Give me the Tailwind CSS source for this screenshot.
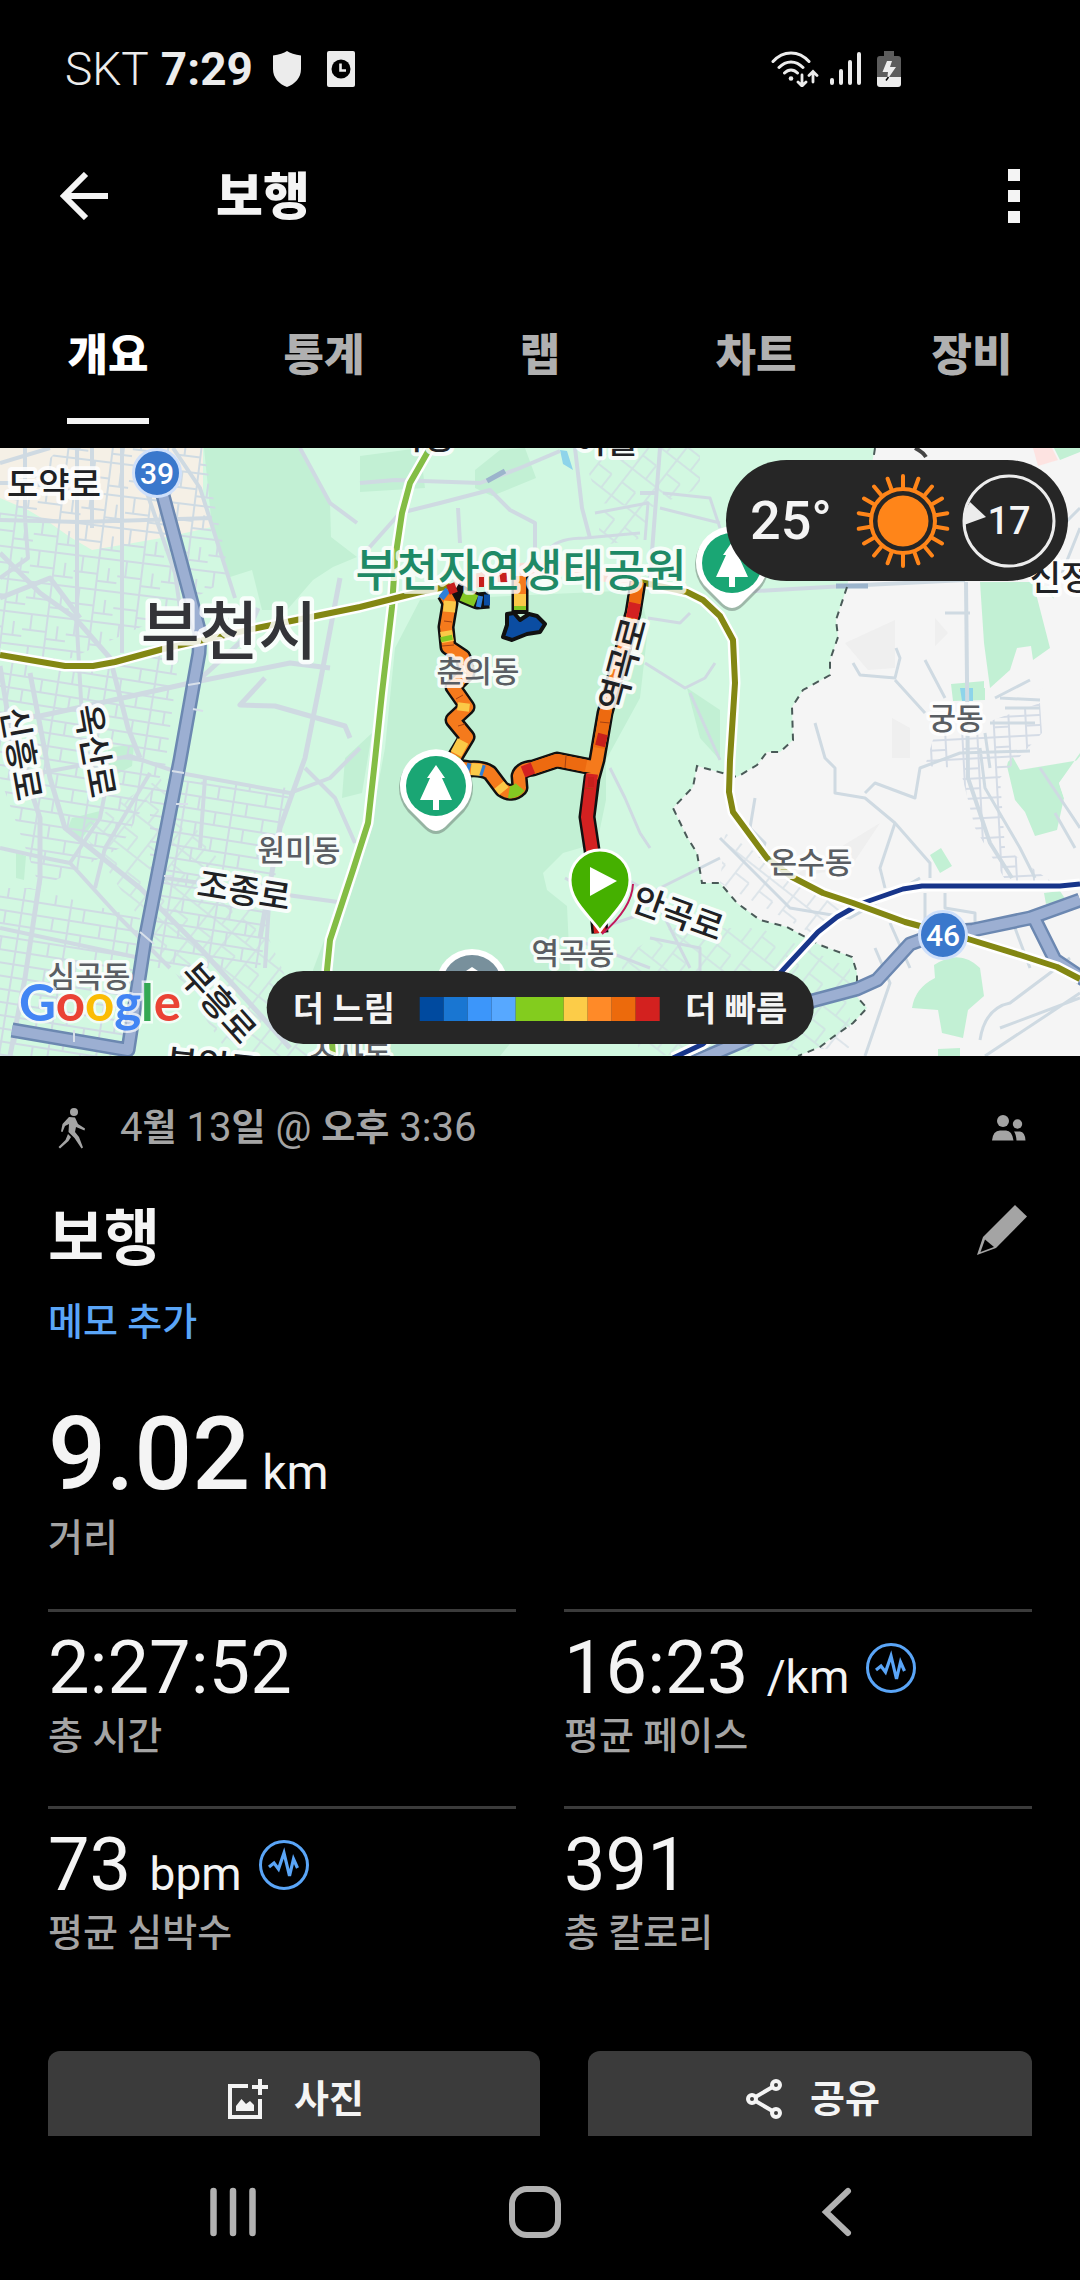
<!DOCTYPE html>
<html lang="ko">
<head>
<meta charset="utf-8">
<meta name="viewport" content="width=device-width, initial-scale=1">
<title>보행</title>
<script src="https://cdn.jsdelivr.net/npm/@tailwindcss/browser@4"></script>
</head>
<body class="bg-black">
<div class="flex h-screen flex-col overflow-hidden bg-black font-['Roboto','Noto_Sans_CJK_KR',sans-serif] text-[#f4f4f4]">

  <!-- Status bar -->
  <div class="flex h-[138px] shrink-0 items-center justify-between pl-[65px] pr-[179px] text-[#ececec]">
    <div class="flex items-center">
      <span class="text-[46px] leading-[56px] font-light">SKT</span>
      <span class="ml-3 text-[46px] leading-[56px] font-bold">7:29</span>
      <svg class="ml-5 h-9 w-7" viewBox="0 0 28 36" fill="currentColor" aria-hidden="true"><path d="M14 0C17 2 22 4 28 4.500V18C28 27 22 33 14 36C6 33 0 27 0 18V4.500C6 4 11 2 14 0Z"/></svg>
      <svg class="ml-[26px] h-9 w-7" viewBox="0 0 28 36" aria-hidden="true"><rect width="28" height="36" rx="2" fill="currentColor"/><circle cx="14" cy="18" r="9.500" fill="#000"/><path d="M13.500 12.500V19.500H19" fill="none" stroke="currentColor" stroke-width="2.600"/></svg>
    </div>
    <div class="flex items-center">
      <svg class="h-9 w-12" viewBox="0 0 48 36" fill="none" stroke="currentColor" stroke-width="3" stroke-linecap="round" aria-hidden="true">
        <path d="M2 10.500C12-1 28-1 38 10.500M8 16.500C15 9 25 9 32 16.500M13.500 22C17.500 18 22.500 18 26.500 22"/>
        <circle cx="20" cy="27.500" r="2.300" fill="currentColor" stroke="none"/>
        <path d="M31 24V34M27 31L31 35L35 31M42 31V21M38 24.500L42 20.500L46 24.500" stroke-width="2.800"/>
      </svg>
      <svg class="ml-2.5 h-9 w-8" viewBox="0 0 32 36" stroke="currentColor" stroke-width="4" stroke-linecap="round" aria-hidden="true"><path d="M3 29V32M12 20V32M21 11V32M30 3V32"/></svg>
      <svg class="ml-4 h-9 w-6" viewBox="0 0 24 36" aria-hidden="true">
        <path d="M7 0H17V5H21Q24 5 24 8V26H0V8Q0 5 3 5H7Z" fill="#5c5c5c"/><path d="M0 26H24V33Q24 36 21 36H3Q0 36 0 33Z" fill="currentColor"/>
        <path d="M10 10H15L13 16H19L10 29L11 21H5.500Z" fill="currentColor"/><path d="M11.500 26L9 29.500" stroke="#000" stroke-width="1.500"/>
      </svg>
    </div>
  </div>

  <!-- App bar -->
  <header class="flex h-[116px] shrink-0 items-center pl-12 pr-12">
    <button type="button" aria-label="뒤로" class="flex size-[72px] items-center justify-center">
      <svg class="size-12" viewBox="0 0 48 48" fill="none" stroke="currentColor" stroke-width="6" aria-hidden="true"><path d="M48 24H4M26 2L4 24L26 46"/></svg>
    </button>
    <h1 class="ml-24 pt-1 text-[51px] leading-[72px] font-black">보행</h1>
    <button type="button" aria-label="더보기" class="ml-auto flex h-[72px] w-9 flex-col items-center justify-center gap-[9px]">
      <span class="size-3 bg-[#f4f4f4]"></span><span class="size-3 bg-[#f4f4f4]"></span><span class="size-3 bg-[#f4f4f4]"></span>
    </button>
  </header>

  <!-- Tabs -->
  <nav class="grid h-[194px] shrink-0 grid-cols-5 pt-[72px] text-[44px] leading-[60px] font-black text-[#b0b0b0]">
    <a href="#overview" aria-current="page" class="flex flex-col items-center text-white"><span>개요</span><span class="mt-8 h-1.5 w-[82px] bg-[#f4f4f4]"></span></a>
    <a href="#stats" class="text-center">통계</a>
    <a href="#laps" class="text-center">랩</a>
    <a href="#charts" class="text-center">차트</a>
    <a href="#gear" class="text-center">장비</a>
  </nav>

  <main class="min-h-0 flex-1 overflow-hidden">
    <!-- Route map -->
    <section class="relative h-[608px] overflow-hidden bg-[#d2f8e1]" aria-label="지도">
      <svg class="block h-full w-full font-['Noto_Sans_CJK_KR',sans-serif]" viewBox="0 0 1080 608" preserveAspectRatio="xMidYMid slice" role="img">
        <defs>
          <pattern id="blocksA" width="44" height="32" patternUnits="userSpaceOnUse" patternTransform="rotate(7)"><path d="M0 1H44M0 17H24M24 24H44M8 0V17M24 0V32M35 10V24" fill="none" stroke="#cfdbe3" stroke-width="2"/></pattern>
          <pattern id="blocksB" width="48" height="26" patternUnits="userSpaceOnUse" patternTransform="rotate(9)"><path d="M0 1H48M0 14H48M12 0V14M30 14V26M46 0V26" fill="none" stroke="#cfdbe3" stroke-width="2"/></pattern>
          <pattern id="blocksC" width="30" height="34" patternUnits="userSpaceOnUse" patternTransform="rotate(38)"><path d="M0 1H30M1 0V34M0 18H18M18 18V34" fill="none" stroke="#cfdbe3" stroke-width="2"/></pattern>
          <pattern id="blocksD" width="32" height="20" patternUnits="userSpaceOnUse" patternTransform="rotate(-3)"><path d="M0 1H32M1 0V20M18 0V20M18 11H32" fill="none" stroke="#d5dce6" stroke-width="2"/></pattern>
        </defs>

        <!-- Land cover -->
        <path fill="#f5f0e6" d="M0 0H203V45L212 79L167 89L133 95L92 102L70 89L50 75L28 62L0 50Z"/>
        <g fill="#c2f0d4">
          <path d="M204 0L212 79L230 129L252 122L262 162L287 162L313 132L333 119L357 109L331 89L330 55L300 0Z"/>
          <path d="M360 8L420 0L425 40L360 44ZM475 22L500 2L525 0L536 30L492 48L475 40Z"/>
          <path d="M395 200L420 152L640 142L648 180L640 250L606 312L606 352L597 395L563 405L543 425L547 442L567 458L570 522L500 608H325L313 522L340 450L372 370L385 300Z"/>
          <path d="M345 310L372 285L362 345L342 350ZM72 370L104 362L82 390L66 384ZM108 300L134 296L132 318L110 330ZM16 405L26 408L24 432L16 430Z"/>
          <path d="M687 240L720 262V312L700 290Z"/>
        </g>
        <path fill="#f5f5f5" d="M875 0L847 139L836 172L838 189L830 212V227L803 242L792 259L793 292L780 304L767 304L757 317L737 329L697 318L693 339L673 360L687 389L697 405L702 435L720 435L737 455L760 472L787 479L820 497L852 509L857 525V549L867 560L853 575L833 589L820 599L798 608H1080V0Z"/>
        <path fill="#efefef" d="M845 195L895 172L895 220L868 222ZM892 270L910 280V310H892ZM790 430L880 375L850 420ZM935 170L948 185L935 198Z"/>
        <g fill="#c2f0d4">
          <path d="M976 134H1033L1057 153L1080 158V312L1020 322L1010 304L1007 318L1015 352L1025 364L1035 388L1057 382L1064 350L1059 335L1080 305V140Z"/>
          <path d="M951 236L985 233V252L953 253ZM930 407L941 400L952 418L940 425ZM1044 445L1060 443L1066 452L1046 456Z"/>
          <path d="M934 517Q960 500 980 520L984 548L968 562L963 590L942 585L938 562L912 560Q915 540 935 530ZM938 601L960 600V608H938Z"/>
        </g>
        <path fill="#f5f5f5" d="M976 134V165L984 195V240H998L1017 200L1031 198L1033 212L1052 215L1044 240L1022 248L1043 258L1044 282L1030 290L1010 312L985 335V134Z"/>
        <path fill="#c2f0d4" d="M980 134H1033L1050 200L1033 212L1031 198L1017 200L1010 222L990 240L984 195Z"/>
        <path fill="#f5f5f5" d="M1052 145L1058 163L1071 167L1080 160V0H1000L1040 130ZM1080 308L1059 335L1064 350L1080 348Z"/>
        <path fill="#fde3e1" d="M1033 0H1052L1058 12L1038 18Z"/><path fill="#c2f0d4" d="M1054 0H1080V4L1060 12Z"/>
        <path fill="#8ed4ea" d="M960 240H973V253H962ZM560 2L567 3L573 22L563 16Z"/>

        <!-- Dense blocks -->
        <path fill="url(#blocksA)" d="M60 0H203L230 130L150 175L60 215L0 200V60Z"/>
        <path fill="url(#blocksB)" d="M80 215L180 200L165 320L120 400L40 440L0 330V215ZM150 330L290 340L260 520H150Z"/>
        <path fill="url(#blocksB)" d="M30 440L140 470L120 608H0V440Z"/>
        <path fill="url(#blocksC)" d="M80 380L160 330L260 470L320 608H230Z" opacity=".7"/>
        <path fill="url(#blocksC)" d="M585 15L620 0H700V40L650 60L600 55ZM600 65L648 55L645 90L598 98Z" opacity=".7"/>
        <path fill="url(#blocksC)" d="M620 510L670 480L760 480L850 520V600L640 608Z" opacity=".6"/>
        <path fill="url(#blocksD)" d="M935 285L985 275L1040 255L1042 285L1000 330L1005 400L1060 440H1010L975 380L960 320L925 318Z"/>
        <path fill="url(#blocksC)" d="M725 385L780 420L850 455L820 490L720 435Z" opacity=".6"/>

        <!-- Local streets -->
        <g fill="none" stroke="#cfdae2" stroke-width="3" stroke-linejoin="round">
          <path stroke-width="4" d="M77 0V180L82 270M92 0V80M25 0V70L28 110L0 130M0 15L50 0M0 35H75M122 0V205M0 72L80 74L212 70M140 25L175 125L180 160M173 0L200 40L235 150"/>
          <path stroke-width="5" d="M0 105L40 145L75 170L110 210L128 280L140 310M0 150L50 130L80 170"/>
          <path stroke-width="5" d="M0 270L40 268L100 255L190 235L290 215L330 220M258 160L245 190L190 240M265 230L240 257L275 258L345 278L350 290M340 130L320 235L305 310L280 380L260 490"/>
          <path stroke-width="5" d="M30 225L50 330L65 380L140 440L200 500L290 600M0 218L10 280L40 370L40 430L25 530L10 608"/>
          <path stroke-width="4" d="M40 325L130 308L180 325L290 345L330 330L360 300M105 345L100 370L70 415M150 325L105 400L95 440M0 400L45 410L70 415L120 470L170 520"/>
          <path stroke-width="4" d="M0 480L140 510M165 430L345 455M270 440L265 520M205 330L200 400M305 320L335 350L355 395"/>
          <path stroke-width="4" d="M360 35L395 32L480 35L520 20L560 3M575 0L582 60L590 90M660 0L650 130M655 45H640M300 0L330 55L357 75M360 110L400 65L440 55L490 42L510 62L535 75V100M458 60L460 95"/>
          <path d="M550 100Q560 90 585 90L640 85M660 60L720 75M663 45L710 50L720 80M595 65L648 55L645 92M648 170L680 175L690 165M645 215L685 240L705 230L715 215M690 245L720 312M610 320L625 350L640 385L650 400M565 430L600 450M625 430L650 445L720 410"/>
          <path d="M600 480L660 460L690 520M650 490L700 500V540M585 495L650 520"/>
          <path stroke-width="4" d="M720 145L845 138L965 132M966 134L968 330L990 395L1012 430"/>
          <path d="M853 215L860 227L895 230L900 210L896 200M895 232L925 265M925 212L945 250M945 165H970M815 275L825 310L835 320V345L865 350L895 375L930 415V430M865 345L875 335L915 350L920 320L960 305L1030 303M980 300L985 340L1020 400L1035 430M995 250L1030 232M1000 250L1040 252M1005 260H1040M990 275H1035M985 285L990 320"/>
          <path d="M895 375L880 420L885 440M755 350L750 380L765 395L760 410M720 390L790 460L850 470L920 430M925 445V490M945 445V460L975 465V480M890 475L910 520M875 500L890 535L865 608M980 592Q985 560 1010 555L1070 510M985 608L1050 565L1080 545M1015 480L1030 520M1000 580L1080 550M1040 320L1080 380M1055 365L1075 400M1040 100L1080 60M1060 130L1080 80"/>
        </g>
        <path d="M487 33L505 23M836 138H868" stroke="#9cb4cc" stroke-width="5"/>
        <path fill="none" stroke="#4a5a58" stroke-width="2" stroke-dasharray="7 6" d="M875 0L872 20M847 139L836 172L838 189L830 212V227L803 242L792 259L793 292L780 304L767 304L757 317L737 329L697 318L693 339L673 360L687 389L697 405L702 435L720 435L737 455L760 472L787 479L820 497L852 509L857 525V549L867 560L853 575L833 589L820 599L798 608"/>

        <!-- Highways -->
        <g fill="none" stroke-linejoin="round">
          <path stroke="#6c88b1" stroke-width="15" d="M157 25L200 185L199 205L180 312L145 492L128 602L12 582M680 620L750 590L812 553L857 541L877 532L910 496L943 484L973 482L1030 470L1080 452M1035 472L1055 512L1085 532"/>
          <path stroke="#9cafd2" stroke-width="10" d="M157 25L200 185L199 205L180 312L145 492L128 602L12 582M680 620L750 590L812 553L857 541L877 532L910 496L943 484L973 482L1030 470L1080 452M1035 472L1055 512L1085 532"/>
          <path stroke="#d8e0ea" stroke-width="2" d="M188 237L200 235M193 261L203 263M172 323L184 325M176 356H188M164 428H172M140 484L154 496M74 582V594"/>
        </g>

        <!-- Subway lines -->
        <g fill="none" stroke-linejoin="round">
          <path stroke="#fff" stroke-width="11" d="M430 0L410 35L402 65L395 112L392 159L382 245L375 312L368 375L353 422L330 492L327 522L333 608"/>
          <path stroke="#84bd45" stroke-width="6" d="M430 0L410 35L402 65L395 112L392 159L382 245L375 312L368 375L353 422L330 492L327 522L333 608"/>
          <path stroke="#fff" stroke-width="11" d="M673 610L703 596L782 523L818 484L837 469L860 456L903 441L922 438H1060L1080 436"/>
          <path stroke="#17358a" stroke-width="5" d="M673 610L703 596L782 523L818 484L837 469L860 456L903 441L922 438H1060L1080 436"/>
          <path stroke="#fff" stroke-width="11" d="M0 207L65 218H93L115 214L163 201L257 180L360 159L420 144L450 138M640 134L687 144L703 152L720 168L733 192L735 235L730 312L729 344L733 364L767 410L792 429L823 445L853 455L905 474L968 491L1020 507L1057 519L1080 531"/>
          <path stroke="#838713" stroke-width="6" d="M0 207L65 218H93L115 214L163 201L257 180L360 159L420 144L450 138M640 134L687 144L703 152L720 168L733 192L735 235L730 312L729 344L733 364L767 410L792 429L823 445L853 455L905 474L968 491L1020 507L1057 519L1080 531"/>
        </g>

        <!-- Recorded route, coloured by pace -->
        <g fill="none" stroke-linejoin="round">
          <path stroke="#f7ddd4" stroke-width="14" d="M455 138L520 122L560 120L640 132"/>
          <path stroke="#111" stroke-width="17" d="M445 146L450 155L446 179L448 199L463 209L467 225L453 239L467 259L453 272L467 289L455 309L450 318L470 321Q482 320 490 325L502 341Q512 348 520 340L519 328Q521 321 533 320L557 312L592 319M520 128V166M455 142L465 148L477 153L489 152M638 134L633 165L605 265L597 312L592 330L587 369L592 402L600 485"/>
          <path stroke="#f57a1c" stroke-width="12" d="M445 146L450 155L446 179L448 199L463 209L467 225L453 239L467 259L453 272L467 289L455 309L450 318L470 321Q482 320 490 325L502 341Q512 348 520 340L519 328Q521 321 533 320L557 312L592 319M520 128V160M638 134L633 165L605 265L597 312L592 330"/>
          <path stroke="#ed6a10" stroke-width="12" d="M533 320L557 312L586 318M637 134L635 155M606 262L599 300"/>
          <path stroke="#d32121" stroke-width="12" d="M635 155L632 170M592 326L587 369L592 402L600 485M523 324L533 320"/>
          <path stroke="#fbc947" stroke-width="12" d="M450 153L449 164M446 183L448 194M464 255L463 263M463 293L456 306M471 321L482 322M499 337L504 343M520 146V158"/>
          <path stroke="#84c822" stroke-width="12" d="M446 188L447 193M455 307L452 313M509 344Q515 345 520 339M462 147L476 153M520 158V162"/>
          <path stroke="#2f7fd8" stroke-width="11" d="M442 144L447 148M477 153L482 154M466 320L470 321M481 322L484 323"/>
          <path stroke="#0b4da2" stroke-width="11" d="M484 152H490"/>
          <path stroke="#c71f1c" stroke-width="10" d="M479 134H484M500 130L507 129M448 142L456 139M600 298L603 286M588 334H594"/>
          <path stroke="#a54112" stroke-width="1" d="M444 173L452 174M442 198L454 197M463 247L456 251M458 278L465 276M566 308L565 320M593 341L585 340M614 238L604 236M610 275L600 274"/>
          <path fill="#0b4da2" stroke="#111" stroke-width="4" d="M507 166L514 165L520 172L529 166L537 168L545 176L540 184L527 186L512 192L503 189L507 177Z"/>
        </g>

        <!-- Road shields -->
        <g fill="#3a78cc" stroke="#cfe0fa" stroke-width="3"><circle cx="157" cy="25" r="23.500"/><circle cx="943" cy="487" r="23.500"/></g>
        <g class="font-['Roboto']" fill="#fff" font-size="30" font-weight="500" text-anchor="middle"><text x="157" y="36">39</text><text x="943" y="498">46</text></g>

        <!-- Road names -->
        <g fill="#202124" stroke="#fff" stroke-opacity=".85" stroke-width="8" stroke-linejoin="round" paint-order="stroke" font-size="34" font-weight="500" text-anchor="middle">
          <text x="54" y="49">도약로</text>
          <text transform="translate(21 306) rotate(80)" y="12">신흥로</text>
          <text transform="translate(95 303) rotate(80)" y="12">옥산로</text>
          <text transform="translate(244 443) rotate(9)" y="12">조종로</text>
          <text transform="translate(218 555) rotate(48)" y="12">부흥로</text>
          <text transform="translate(213 618) rotate(6)" y="12">부일로</text>
          <text transform="translate(678 466) rotate(20)" y="12">안곡로</text>
          <text transform="translate(623 216) rotate(-75)" y="12">역곡로</text>
          <text x="606" y="5">여월</text>
          <text x="424" y="1">작동</text>
          <text x="1061" y="142">신정</text>
          <text x="229" y="206" font-size="64" fill="#333438" stroke-width="9">부천시</text>
        </g>
        <path d="M915 0Q923 4 926 9" stroke="#444" stroke-width="4" fill="none"/>
        <!-- District names -->
        <g fill="#5a5e63" stroke="#fff" stroke-opacity=".85" stroke-width="7" stroke-linejoin="round" paint-order="stroke" font-size="30" font-weight="500" text-anchor="middle">
          <text x="299" y="413">원미동</text>
          <text x="89" y="539">심곡동</text>
          <text x="350" y="619">소사동</text>
          <text x="573" y="516">역곡동</text>
          <text x="811" y="425">온수동</text>
          <text x="956" y="281">궁동</text>
          <text x="478" y="234">춘의동</text>
        </g>
        <text x="521" y="139" fill="#1f8a66" stroke="#fff" stroke-opacity=".8" stroke-width="8" stroke-linejoin="round" paint-order="stroke" font-size="45" font-weight="500" text-anchor="middle">부천자연생태공원</text>

        <!-- Place pins -->
        <g id="parkPin">
          <path d="M436 386Q430 386 424 380L408 364A37 37 0 1 1 464 364L448 380Q442 386 436 386Z" fill="#5f6b66" opacity=".45"/>
          <path d="M436 383Q430 383 424 376L408 360A36 36 0 1 1 464 360L448 376Q442 383 436 383Z" fill="#fff"/>
          <circle cx="436" cy="338" r="30" fill="#1aa674"/>
          <path fill="#fff" d="M436 317L445 330H442L452 352H439V362H433V352H420L430 330H427Z"/>
        </g>
        <use href="#parkPin" x="296" y="-223"/>
        <circle cx="472" cy="537" r="36" fill="#fff"/><circle cx="472" cy="537" r="30" fill="#78909c"/><path d="M460 527L472 519L484 527V540H460Z" fill="#fff"/>
        <!-- Start marker -->
        <path d="M633 436Q632 460 602 486" fill="none" stroke="#c2185b" stroke-width="2"/>
        <path d="M600 483C590 468 570 454 570 432A30 30 0 0 1 630 432C630 454 610 468 600 483Z" fill="#45b000" stroke="#fff" stroke-width="3"/>
        <path d="M590 419L617 433L590 448Z" fill="#fff"/>

        <!-- Map provider -->
        <text x="19" y="573" class="font-['Lato']" font-size="51" font-weight="700" stroke="#fff" stroke-opacity=".7" stroke-width="5" paint-order="stroke"><tspan fill="#4285f4">G</tspan><tspan fill="#ea4335">o</tspan><tspan fill="#fbbc04">o</tspan><tspan fill="#4285f4">g</tspan><tspan fill="#34a853">l</tspan><tspan fill="#ea4335">e</tspan></text>
      </svg>

      <!-- Weather -->
      <div class="absolute top-3 right-3 flex h-[121px] items-center rounded-full bg-[#262626] pr-3 pl-6">
        <span class="text-[54px] leading-[72px] font-medium">25°</span>
        <svg class="ml-6 size-[94px]" viewBox="-47 -47 94 94" fill="none" stroke="#ff8519" aria-hidden="true">
          <circle r="25.500" fill="#ff8519" stroke="none"/><circle r="32" stroke-width="4"/>
          <g stroke-width="4" stroke-linecap="round">
            <path id="rays" d="M0-33V-45M0 33V45"/>
            <use href="#rays" transform="rotate(20)"/><use href="#rays" transform="rotate(40)"/><use href="#rays" transform="rotate(60)"/><use href="#rays" transform="rotate(80)"/><use href="#rays" transform="rotate(100)"/><use href="#rays" transform="rotate(120)"/><use href="#rays" transform="rotate(140)"/><use href="#rays" transform="rotate(160)"/>
          </g>
        </svg>
        <div class="relative ml-3 flex size-[94px] items-center justify-center">
          <svg class="absolute inset-0" viewBox="-47 -47 94 94" aria-hidden="true"><circle r="45" fill="none" stroke="#ececec" stroke-width="3"/><path d="M-39-19L-23-4L-45 4Q-46-8-39-19Z" fill="#ececec"/></svg>
          <span class="text-[38px] leading-[48px] font-medium">17</span>
        </div>
      </div>

      <!-- Pace legend -->
      <div class="absolute bottom-3 left-1/2 flex h-[73px] -translate-x-1/2 items-center gap-[25px] rounded-full bg-[#262626] px-[26px] pt-0.5 text-[34px] leading-[48px] font-bold whitespace-nowrap">
        <span>더 느림</span>
        <div class="flex h-6" aria-hidden="true">
          <i class="w-6 bg-[#004a9f]"></i><i class="w-6 bg-[#1976d2]"></i><i class="w-6 bg-[#3c96fa]"></i><i class="w-6 bg-[#57a8ff]"></i><i class="w-12 bg-[#83cc1e]"></i><i class="w-6 bg-[#fccc48]"></i><i class="w-6 bg-[#ff8a28]"></i><i class="w-6 bg-[#ec6a0c]"></i><i class="w-6 bg-[#d3211f]"></i>
        </div>
        <span>더 빠름</span>
      </div>
    </section>

    <!-- Activity details -->
    <section class="px-12 pt-12">
      <div class="flex h-12 items-center text-[#a4a4a4]">
        <svg class="size-12" viewBox="0 0 48 48" fill="currentColor" aria-hidden="true">
          <circle cx="26" cy="8" r="4"/>
          <path d="M21 13L27 13.500L30 20L37 24.500L36.500 26.500L28 23L27 28L31 33L35 43.500L33.500 44.500L26.500 34L20.500 28L21 20L17 22L14.500 28L13 27.500L14.500 20Z"/><path d="M20 30L23 33L20.500 37L12 44.500L10.500 43L17.500 36Z"/>
        </svg>
        <p class="ml-6 text-[40px] leading-[48px]">4<span class="text-[37px] leading-none font-bold">월</span> 13<span class="text-[37px] leading-none font-bold">일</span> @ <span class="text-[37px] leading-none font-bold">오후</span> 3:36</p>
        <svg class="mr-1.5 ml-auto h-[26px] w-[34px]" viewBox="0 0 34 26" fill="currentColor" aria-hidden="true"><circle cx="11" cy="6" r="6"/><circle cx="25.500" cy="9" r="4.700"/><path d="M0 25.500Q1 15.500 8 15.500H14Q20 15.500 21.500 25.500ZM22 16.500H28Q33 17 33.500 25.500H24.500Q24 19 22 16.500Z"/></svg>
      </div>

      <div class="mt-12 flex items-start justify-between">
        <h2 class="text-[61px] leading-[78px] font-bold">보행</h2>
        <button type="button" aria-label="이름 편집" class="text-[#a4a4a4]">
          <svg class="size-15" viewBox="0 0 60 60" aria-hidden="true"><path d="M43 5L55 16.500L24 48L5 55L11 37Z" fill="currentColor"/><path d="M13 39.500L22 47L8.500 52Z" fill="#000"/></svg>
        </button>
      </div>
      <a href="#memo" class="mt-5 block w-fit text-[38px] leading-[48px] font-medium text-[#5aa5f7]">메모 추가</a>

      <p class="mt-12 text-[102px] leading-[120px] font-medium">9.02<span class="text-[48px] leading-none font-normal"> km</span></p>
      <p class="text-[38px] leading-[48px] font-medium text-[#a4a4a4]">거리</p>

      <dl class="mt-[47px] grid grid-cols-2 gap-x-12">
        <div class="flex flex-col-reverse border-t-[3px] border-[#3b3b3b] pt-3 pb-[46px]">
          <dt class="text-[38px] leading-[48px] font-medium text-[#a4a4a4]">총 시간</dt>
          <dd class="text-[74px] leading-[88px]">2:27:52</dd>
        </div>
        <div class="flex flex-col-reverse border-t-[3px] border-[#3b3b3b] pt-3 pb-[46px]">
          <dt class="text-[38px] leading-[48px] font-medium text-[#a4a4a4]">평균 페이스</dt>
          <dd class="flex items-center text-[74px] leading-[88px]"><span>16:23 <span class="text-[46px] leading-none">/km</span></span>
            <svg class="ml-4 size-[52px]" viewBox="0 0 52 52" fill="none" stroke="#5aa5f7" stroke-width="3" aria-hidden="true"><circle cx="26" cy="26" r="23.500"/><path d="M11 28L16 24L20.500 30L26 14L31.500 37L35.500 20L39.500 29" stroke-width="3.200"/></svg></dd>
        </div>
        <div class="flex flex-col-reverse border-t-[3px] border-[#3b3b3b] pt-3 pb-[46px]">
          <dt class="text-[38px] leading-[48px] font-medium text-[#a4a4a4]">평균 심박수</dt>
          <dd class="flex items-center text-[74px] leading-[88px]"><span>73 <span class="text-[46px] leading-none">bpm</span></span>
            <svg class="ml-4 size-[52px]" viewBox="0 0 52 52" fill="none" stroke="#5aa5f7" stroke-width="3" aria-hidden="true"><circle cx="26" cy="26" r="23.500"/><path d="M11 28L16 24L20.500 30L26 14L31.500 37L35.500 20L39.500 29" stroke-width="3.200"/></svg></dd>
        </div>
        <div class="flex flex-col-reverse border-t-[3px] border-[#3b3b3b] pt-3 pb-[46px]">
          <dt class="text-[38px] leading-[48px] font-medium text-[#a4a4a4]">총 칼로리</dt>
          <dd class="text-[74px] leading-[88px]">391</dd>
        </div>
      </dl>

      <div class="mt-12 grid grid-cols-[41fr_37fr] gap-12 text-[38px] leading-[48px] font-bold">
        <button type="button" class="flex h-24 items-center justify-center gap-[22px] rounded-xl bg-[#3b3b3b]">
          <svg class="size-12" viewBox="0 0 48 48" fill="none" stroke="currentColor" stroke-width="4" aria-hidden="true"><path d="M24 11H6V42H36V24"/><path d="M36 4V20M28 12H44"/><path d="M12 36V31L17.500 24L22 29L26 26L30 30V36Z" fill="currentColor" stroke="none"/></svg>
          사진
        </button>
        <button type="button" class="flex h-24 items-center justify-center gap-[22px] rounded-xl bg-[#3b3b3b]">
          <svg class="size-12" viewBox="0 0 48 48" fill="none" stroke="currentColor" stroke-width="4" aria-hidden="true"><circle cx="12" cy="24" r="4"/><circle cx="36" cy="10" r="4"/><circle cx="36" cy="38" r="4"/><path d="M15.500 22L32.500 12M15.500 26L32.500 36"/></svg>
          공유
        </button>
      </div>
    </section>
  </main>

  <!-- System navigation -->
  <nav class="grid h-36 shrink-0 grid-cols-3 bg-black pr-[92px] pb-2 pl-[82px] text-[#b2b2b2]">
    <button type="button" aria-label="최근 앱" class="flex items-center justify-center pt-4"><svg class="size-[52px]" viewBox="0 0 52 52" stroke="currentColor" stroke-width="6.500" stroke-linecap="round" aria-hidden="true"><path d="M6.500 5V47M26 5V47M45.500 5V47"/></svg></button>
    <button type="button" aria-label="홈" class="flex items-center justify-center pt-4"><svg class="size-[52px]" viewBox="0 0 52 52" fill="none" stroke="currentColor" stroke-width="6" aria-hidden="true"><rect x="3" y="3" width="46" height="46" rx="15"/></svg></button>
    <button type="button" aria-label="뒤로 가기" class="flex items-center justify-center pt-4"><svg class="size-[52px]" viewBox="0 0 52 52" fill="none" stroke="currentColor" stroke-width="6" stroke-linecap="round" aria-hidden="true"><path d="M37 5L15 26L37 47"/></svg></button>
  </nav>
</div>
</body>
</html>
